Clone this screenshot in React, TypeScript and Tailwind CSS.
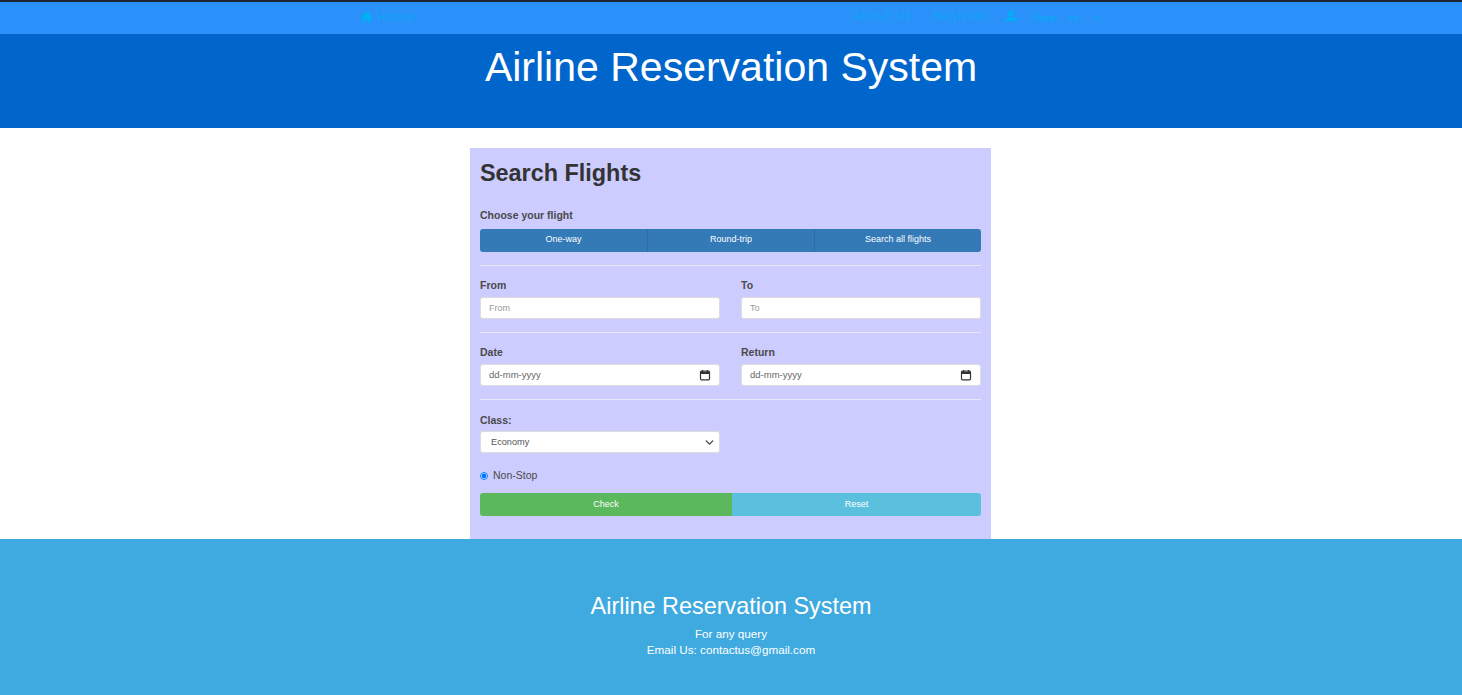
import { ChevronDown } from 'lucide-react'

function Divider() {
  return <hr className="border-0 border-t border-[#e6e6f5]" />
}

function Label({ text }: { text: string }) {
  return <label className="block h-[12px] text-[10.5px] leading-[12px] font-bold text-[#4a4a4a]">{text}</label>
}

function TextField({ label, placeholder }: { label: string; placeholder: string }) {
  return (
    <div className="w-[240px]">
      <Label text={label} />
      <input
        placeholder={placeholder}
        className="mt-[6px] block h-[22px] w-full rounded-[3px] border border-[#ddd] bg-white px-2 text-[9px] outline-none placeholder:text-[#999]"
      />
    </div>
  )
}

function DateField({ label }: { label: string }) {
  return (
    <div className="w-[240px]">
      <Label text={label} />
      <div className="mt-[6px] flex h-[22px] items-center justify-between rounded-[3px] border border-[#ddd] bg-white pr-[8px] pl-2 text-[9.5px] text-[#666]">
        <span>dd-mm-yyyy</span>
        <svg width="12" height="12" viewBox="0 0 12 12" fill="none">
          <path d="M1.500 3.200a1 1 0 0 1 1-1h7a1 1 0 0 1 1 1v6.600a1 1 0 0 1-1 1h-7a1 1 0 0 1-1-1z" stroke="#333" strokeWidth="1.200" />
          <path d="M1.500 3h9v2h-9z" fill="#333" />
          <path d="M3.500 1v2M8.500 1v2" stroke="#333" strokeWidth="1.200" />
        </svg>
      </div>
    </div>
  )
}

export default function App() {
  return (
    <div className="flex h-[695px] flex-col overflow-hidden bg-white font-['Liberation_Sans',Arial,sans-serif]">
      <nav className="flex h-[34px] items-center border-t-2 border-[#1c2733] bg-[#2a91fb] pl-[360px] text-[#0ea5f5]">
        <a className="flex items-center gap-[4px] font-['DejaVu_Sans',sans-serif] text-[11.5px] tracking-[1px]">
          <svg className="-mt-[3px]" width="13" height="12" viewBox="0 0 13 12" fill="#00b0f5">
            <path d="M6.500 0.500 0.500 6h1.800v5.500h3V8h2.400v3.500h3V6h1.800l-2.300-2.100V1h-1.600v1.400z" />
          </svg>
          Home
        </a>
        <div className="ml-[438px] flex items-center font-['DejaVu_Sans',sans-serif]">
          <a className="-mt-[2px] text-[11.5px] tracking-[1px]">About Us</a>
          <a className="-mt-[2px] ml-[20px] text-[11.5px] tracking-[1px]">Register</a>
          <svg className="-mt-[4px] ml-[17px]" width="12" height="12" viewBox="0 0 12 12" fill="#00b0f5">
            <path d="M6 0.500c-1.700 0-2.600 1.200-2.600 2.800 0 1.200.5 2.300 1.300 2.900v1L1 8.800c-.5.2-.8.6-.8 1.200v1h11.600v-1c0-.6-.3-1-.8-1.200L7.300 7.200v-1c.8-.6 1.300-1.700 1.300-2.900C8.600 1.700 7.700.5 6 .5z" />
          </svg>
          <a className="ml-[15px] font-['DejaVu_Serif',serif] text-[8.5px] font-bold tracking-[0.6px]">Sign</a>
          <a className="ml-[13px] font-['DejaVu_Serif',serif] text-[8.5px] font-bold tracking-[0.6px]">in</a>
          <span className="ml-[15px] h-0 w-0 border-x-[3px] border-t-[3px] border-x-transparent border-t-[#0ea5f5]" />
        </div>
      </nav>

      <header className="h-[94px] bg-[#0066cc] pt-[7px] text-center text-[41px] leading-[52px] text-white">
        Airline Reservation System
      </header>

      <main className="flex-1 pt-[20px] pr-[1px]">
        <form className="mx-auto h-[391px] w-[521px] bg-[#ccccff] px-[10px]">
          <h2 className="pt-[11px] text-[23.4px] leading-[28px] font-bold text-[#333]">Search Flights</h2>
          <div className="mt-[22px]">
            <Label text="Choose your flight" />
          </div>
          <div className="mt-[8px] grid h-[23px] grid-cols-3 overflow-hidden rounded-[3px] bg-[#337ab7] text-center text-[9px] leading-[21px] text-white">
            <span>One-way</span>
            <span className="border-l border-[#2e6da4]">Round-trip</span>
            <span className="border-l border-[#2e6da4]">Search all flights</span>
          </div>
          <div className="mt-[13px]">
            <Divider />
          </div>
          <div className="mt-[13px] flex justify-between">
            <TextField label="From" placeholder="From" />
            <TextField label="To" placeholder="To" />
          </div>
          <div className="mt-[13px]">
            <Divider />
          </div>
          <div className="mt-[13px] flex justify-between">
            <DateField label="Date" />
            <DateField label="Return" />
          </div>
          <div className="mt-[13px]">
            <Divider />
          </div>
          <div className="mt-[14px] w-[240px]">
            <Label text="Class:" />
            <div className="mt-[5px] flex h-[22px] items-center justify-between rounded-[3px] border border-[#ddd] bg-white pr-[3px] pl-[10px] text-[9.2px] text-[#555]">
              <span className="pt-[1px]">Economy</span>
              <ChevronDown size={13} strokeWidth={2.5} color="#444" />
            </div>
          </div>
          <div className="mt-[17px] flex h-[12px] items-center gap-[5px] text-[10.5px] text-[#4a4a4a]">
            <input type="radio" defaultChecked className="m-0 h-[8px] w-[8px] accent-[#0075ff]" />
            Non-Stop
          </div>
          <div className="mt-[11px] flex h-[23px] overflow-hidden rounded-[3px] text-center text-[9px] leading-[22px] text-white">
            <span className="w-[252px] bg-[#5cb85c]">Check</span>
            <span className="flex-1 bg-[#5bc0de]">Reset</span>
          </div>
        </form>
      </main>

      <footer className="h-[156px] bg-[#3faae0] pt-[52px] text-center text-white">
        <div className="text-[23.4px] leading-[30px]">Airline Reservation System</div>
        <div className="mt-[5px] text-[11.7px] leading-[16px]">For any query</div>
        <div className="text-[11.7px] leading-[16px]">Email Us: contactus@gmail.com</div>
      </footer>
    </div>
  )
}
